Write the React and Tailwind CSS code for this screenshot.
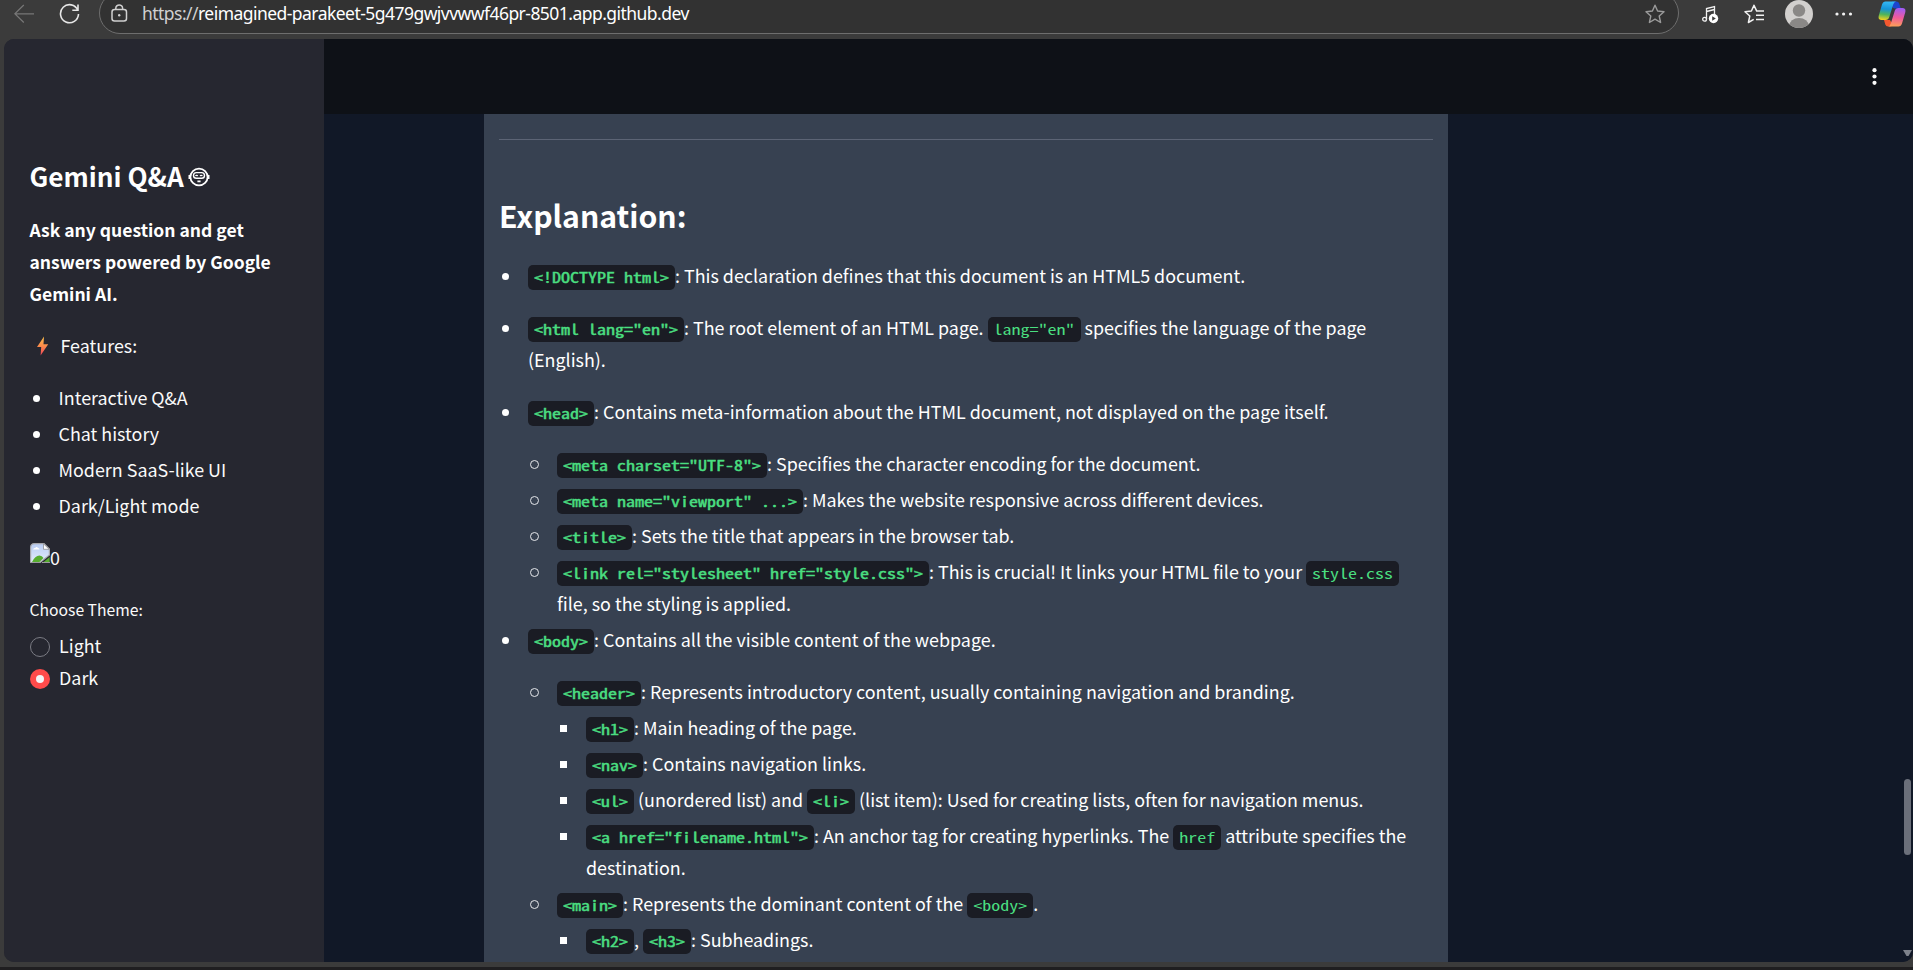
import React from "react";

function Code({ children, bold = false }) {
  return (
    <code
      className={`inline-block h-[25px] whitespace-pre rounded-[5px] bg-[#1a1c24] px-[6px] font-['Noto_Sans_Mono_CJK_SC','Liberation_Mono',monospace] text-[18px] leading-[21px] text-[#4ade80] ${
        bold ? "[-webkit-text-stroke:0.55px_#4ade80]" : ""
      }`}
    >
      <span className="inline-block origin-[0_18px] scale-y-[0.8]">{children}</span>
    </code>
  );
}

function Bullet({ kind }) {
  if (kind === "ring") return <span className="mt-[13px] ml-[2px] size-[9px] rounded-full border border-[#e5e7eb]" />;
  if (kind === "square") return <span className="mt-[14px] ml-[3px] size-[7px] bg-white" />;
  return <span className="mt-[14px] ml-[3px] size-[7px] rounded-full bg-white" />;
}

function Item({ kind, children }) {
  return (
    <div className="flex">
      <div className="flex h-8 w-[29px] shrink-0">
        <Bullet kind={kind} />
      </div>
      <div className="min-w-0">{children}</div>
    </div>
  );
}

function Sidebar() {
  return (
    <aside className="flex w-80 shrink-0 flex-col overflow-hidden bg-[#262730] pt-[113px] pl-[25.5px]">
      <h2 className="flex h-[48px] items-center text-[26.2px] leading-[48px] font-bold text-white">
        Gemini Q&amp;A
        <svg className="mt-[1px] ml-[4px]" width="22" height="20" viewBox="0 0 22 20" fill="none" stroke="#fff">
          <ellipse cx="11" cy="10" rx="8.6" ry="8.4" strokeWidth="1.8" />
          <path d="M1.3 8v4M20.7 8v4" strokeWidth="1.6" />
          <rect x="5.5" y="5.6" width="11" height="5.6" rx="2.8" strokeWidth="1.4" />
          <path d="M7.6 9.2c.2-1.2 1.8-1.2 2 0M12.2 9.2c.2-1.2 1.8-1.2 2 0" strokeWidth="1.2" />
          <path d="M9.4 14.4h3.2" strokeWidth="1.6" />
        </svg>
      </h2>
      <p className="mt-[14px] w-[270px] text-[17.5px] font-bold text-white">
        Ask any question and get
        <br />
        answers powered by Google
        <br />
        Gemini AI.
      </p>
      <p className="mt-[19px] flex items-center">
        <svg className="mt-[1px] mr-[12px] ml-[6px]" width="13" height="20" viewBox="0 0 13 20">
          <defs>
            <linearGradient id="bolt" x1="0" y1="0" x2="0" y2="1">
              <stop offset="0" stopColor="#fcc04a" />
              <stop offset="0.5" stopColor="#fb8b4b" />
              <stop offset="1" stopColor="#f0425a" />
            </linearGradient>
          </defs>
          <path d="M8 .5 1 11h4.2L4.6 19.5 12.2 8.300H7.500Z" fill="url(#bolt)" />
        </svg>
        Features:
      </p>
      <div className="mt-5 flex flex-col gap-1">
        <Item>Interactive Q&amp;A</Item>
        <Item>Chat history</Item>
        <Item>Modern SaaS-like UI</Item>
        <Item>Dark/Light mode</Item>
      </div>
      <div className="mt-[21px] flex h-8">
        <svg className="mt-[1px] ml-[0.5px]" width="20" height="20" viewBox="0 0 20 20">
          <defs>
            <linearGradient id="sky" x1="0" y1="0" x2="0" y2="1">
              <stop offset="0" stopColor="#b9cdf3" />
              <stop offset="1" stopColor="#e3ecfb" />
            </linearGradient>
          </defs>
          <path d="M.6 19.500V4.500Q.6.600 4.500.600H14l5.400 5.400v6L10 19.500Z" fill="url(#sky)" stroke="#a8a8ac" strokeWidth="1.200" />
          <path d="M13.500.800V6.300H19.200Z" fill="#fff" stroke="#8f8f93" strokeWidth=".8" />
          <path d="M3 6.500q.5-1.800 2.200-1.500Q6.500 3 8 5q1.600.2 1.500 1.600Z" fill="#fff" />
          <path d="M2 19Q5 12.500 9.500 12.500 12 12.500 13.500 15L9.500 19Z" fill="#57ad2f" />
          <path d="M0 19.500H10" stroke="#9b9b9f" strokeWidth="1" />
          <path d="M13 19.500 19.600 14V19.500Z" fill="#57ad2f" />
          <path d="M12 19.500H20" stroke="#9b9b9f" strokeWidth="1" />
        </svg>
        <span className="leading-[31px]">0</span>
      </div>
      <div className="mt-[20px] text-[15.7px]">Choose Theme:</div>
      <div className="mt-[3px] flex items-center">
        <span className="mt-[3px] mr-[9px] ml-[0.5px] size-5 rounded-full border border-[#7b7c84]" />
        Light
      </div>
      <div className="flex items-center">
        <span className="mt-[3px] mr-[9px] ml-[0.5px] flex size-5 items-center justify-center rounded-full bg-[#ff4b4b]">
          <span className="size-2 rounded-full bg-[#f3f4f6]" />
        </span>
        Dark
      </div>
    </aside>
  );
}

function Answer() {
  return (
    <section className="ml-40 h-[848px] w-[964px] overflow-hidden bg-[#374151] pt-[25px] pl-[15px] text-white">
      <div className="w-[934px] border-t border-[#5c6475]" />
      <h2 className="mt-[45px] h-[60px] text-[30.2px] leading-[60px] font-bold">Explanation:</h2>
      <div className="mt-[14px] flex w-[934px] flex-col">
        <Item>
          <Code bold>{"<!DOCTYPE html>"}</Code>: This declaration defines that this document is an HTML5 document.
        </Item>
        <div className="mt-5">
          <Item>
            <Code bold>{'<html lang="en">'}</Code>: The root element of an HTML page. <Code>{'lang="en"'}</Code> specifies the
            language of the page
            <br />
            (English).
          </Item>
        </div>
        <div className="mt-5">
          <Item>
            <Code bold>{"<head>"}</Code>: Contains meta-information about the HTML document, not displayed on the page itself.
            <div className="mt-5 flex flex-col gap-1">
              <Item kind="ring">
                <Code bold>{'<meta charset="UTF-8">'}</Code>: Specifies the character encoding for the document.
              </Item>
              <Item kind="ring">
                <Code bold>{'<meta name="viewport" ...>'}</Code>: Makes the website responsive across different devices.
              </Item>
              <Item kind="ring">
                <Code bold>{"<title>"}</Code>: Sets the title that appears in the browser tab.
              </Item>
              <Item kind="ring">
                <Code bold>{'<link rel="stylesheet" href="style.css">'}</Code>: This is crucial! It links your HTML file to your{" "}
                <Code>style.css</Code>
                <br />
                file, so the styling is applied.
              </Item>
            </div>
          </Item>
        </div>
        <div className="mt-1">
          <Item>
            <Code bold>{"<body>"}</Code>: Contains all the visible content of the webpage.
            <div className="mt-5 flex flex-col gap-1">
              <Item kind="ring">
                <Code bold>{"<header>"}</Code>: Represents introductory content, usually containing navigation and branding.
                <div className="mt-1 flex flex-col gap-1">
                  <Item kind="square">
                    <Code bold>{"<h1>"}</Code>: Main heading of the page.
                  </Item>
                  <Item kind="square">
                    <Code bold>{"<nav>"}</Code>: Contains navigation links.
                  </Item>
                  <Item kind="square">
                    <Code bold>{"<ul>"}</Code> (unordered list) and <Code bold>{"<li>"}</Code> (list item): Used for creating lists,
                    often for navigation menus.
                  </Item>
                  <Item kind="square">
                    <Code bold>{'<a href="filename.html">'}</Code>: An anchor tag for creating hyperlinks. The <Code>href</Code>{" "}
                    attribute specifies the
                    <br />
                    destination.
                  </Item>
                </div>
              </Item>
              <Item kind="ring">
                <Code bold>{"<main>"}</Code>: Represents the dominant content of the <Code>{"<body>"}</Code>.
                <div className="mt-1">
                  <Item kind="square">
                    <Code bold>{"<h2>"}</Code>, <Code bold>{"<h3>"}</Code>: Subheadings.
                  </Item>
                </div>
              </Item>
            </div>
          </Item>
        </div>
      </div>
    </section>
  );
}

const STAR = "M10 1.200 12.600 7 19 7.700 14.200 12 15.600 18.500 10 15.200 4.400 18.500 5.800 12 1 7.700 7.400 7Z";

function BrowserBar() {
  return (
    <div className="flex h-[39px] shrink-0 items-start overflow-hidden bg-[#3b3b3b]">
      <svg className="mt-[4px] ml-[14px]" width="20" height="20" viewBox="0 0 20 20" fill="none" stroke="#777" strokeWidth="1.200">
        <path d="M20 9.800H.8M9.800 1 .8 9.800l9 8.700" />
      </svg>
      <svg className="mt-[3px] ml-[25px]" width="21" height="22" viewBox="0 0 21 22" fill="none" stroke="#e6e6e6" strokeWidth="1.600">
        <path d="M18.800 7.200A9 9 0 1 0 19.500 11M19 1.500V7.300H13.300" />
      </svg>
      <div className="-mt-[8px] ml-[19px] flex h-[42px] w-[1580px] shrink-0 items-start rounded-full border border-[#6e6e6e] bg-[#323232]">
        <svg className="mt-[11px] ml-[11px]" width="17" height="18" viewBox="0 0 17 18" fill="none" stroke="#d0d0d0" strokeWidth="1.500">
          <rect x="1" y="5.500" width="14.500" height="11.500" rx="2.500" />
          <path d="M4.800 5.500V4.300a3.400 3.400 0 0 1 6.800 0v1.200" />
          <circle cx="8.200" cy="11.200" r="1.200" fill="#d0d0d0" stroke="none" />
        </svg>
        <div className="mt-[6px] ml-[14px] h-[30px] w-[548px] font-['Noto_Sans',sans-serif] text-[17.5px] leading-[28px] tracking-[-0.54px] whitespace-nowrap text-white">
          <span className="text-[#d0d0d0]">https://</span>reimagined-parakeet-5g479gwjvvwwf46pr-8501.app.github.dev
        </div>
        <svg className="mt-[11px] ml-[955px]" width="20" height="20" viewBox="0 0 20 20" fill="none" stroke="#9b9b9b" strokeWidth="1.400" strokeLinejoin="round">
          <path d={STAR} />
        </svg>
      </div>
      <svg className="mt-[5px] ml-[23px]" width="17" height="19" viewBox="0 0 17 19" fill="none" stroke="#f2f2f2" strokeWidth="1.300">
        <circle cx="2.600" cy="14.200" r="1.900" />
        <path d="M4.500 14.200V3.500L12.500 1.500V9M4.500 6.500 12.500 4.500" />
        <circle cx="11.500" cy="13.500" r="4.700" fill="#fff" stroke="none" />
        <path d="M10.200 11.200v4.600l3.600-2.300Z" fill="#3b3b3b" stroke="none" />
      </svg>
      <svg className="mt-[4px] ml-[25px]" width="21" height="20" viewBox="0 0 21 20" fill="none" stroke="#f2f2f2" strokeWidth="1.500" strokeLinejoin="round">
        <path d="M13 7 12.600 6.900 10 1.200 7.400 7 1 7.700 5.800 12 4.400 18.500 9.700 15.400" />
        <path d="M12.600 7H20M12 11.200H20M12 15.400H20" />
      </svg>
      <svg className="ml-[20px]" width="28" height="28" viewBox="0 0 28 28">
        <clipPath id="face">
          <circle cx="14" cy="14" r="14" />
        </clipPath>
        <g clipPath="url(#face)">
          <rect width="28" height="28" fill="#d2d0ce" />
          <circle cx="14" cy="10.500" r="6.200" fill="#8a8886" />
          <ellipse cx="14" cy="26" rx="9.800" ry="8" fill="#8a8886" />
        </g>
      </svg>
      <svg className="mt-[12px] ml-[22px]" width="18" height="4" viewBox="0 0 18 4" fill="#f2f2f2">
        <circle cx="2" cy="2" r="1.600" />
        <circle cx="8.600" cy="2" r="1.600" />
        <circle cx="15.500" cy="2" r="1.600" />
      </svg>
      <svg className="mt-[1px] ml-[25px] shrink-0" width="28" height="26" viewBox="0 0 28 26">
        <defs>
          <linearGradient id="cpA" x1="0.400" y1="0" x2="0.300" y2="1">
            <stop offset="0" stopColor="#35b8f5" />
            <stop offset="0.400" stopColor="#1594d8" />
            <stop offset="0.700" stopColor="#4fb45a" />
            <stop offset="1" stopColor="#f4d21f" />
          </linearGradient>
          <linearGradient id="cpB" x1="0.500" y1="0" x2="0.400" y2="1">
            <stop offset="0" stopColor="#a05cf5" />
            <stop offset="0.500" stopColor="#ef5a9d" />
            <stop offset="1" stopColor="#fda057" />
          </linearGradient>
        </defs>
        <path d="M14 .5h4.500q2 0 2.700 2l1.600 5H17Q14.500 7.500 13.500 4Z" fill="#1c45cf" />
        <path d="M6 19h6l2 3.500q1 2.500-2 3H10q-2 0-2.700-2Z" fill="#f4582f" />
        <path d="M7.500.5H18q-2 .3-2.800 3L11.300 16q-.8 3-3.800 3H3.500Q-.3 19 .8 14.500L4 3.500Q5 .5 7.500.5Z" fill="url(#cpA)" />
        <path d="M20.500 25.500H10q2-.3 2.800-3L16.700 10q.8-3 3.800-3h4q3.800 0 2.700 4.500L24 22.500q-1 3-3.500 3Z" fill="url(#cpB)" />
      </svg>
    </div>
  );
}

export default function App() {
  return (
    <div className="flex h-[970px] w-[1913px] flex-col overflow-hidden bg-[#3b3b3b] font-['Noto_Sans_CJK_SC',sans-serif] text-[17.9px] leading-8 text-[#fafafa]">
      <BrowserBar />
      <div className="ml-1 flex h-[923px] shrink-0 overflow-hidden rounded-[10px] bg-[#262730]">
        <Sidebar />
        <main className="flex flex-1 flex-col bg-[#111827]">
          <header className="flex h-[75px] shrink-0 justify-end bg-[#0e1117]">
            <svg className="mt-[28px] mr-[35px]" width="7" height="19" viewBox="0 0 7 19" fill="#fafafa">
              <circle cx="3.500" cy="3.200" r="2.100" />
              <circle cx="3.500" cy="9.500" r="2.100" />
              <circle cx="3.500" cy="15.800" r="2.100" />
            </svg>
          </header>
          <div className="flex justify-between">
            <Answer />
            <div className="mr-[2px] flex w-[8px] flex-col items-center">
              <div className="mt-[665px] h-[76px] w-[7px] shrink-0 rounded-full bg-[#6b6f7a]" />
              <svg className="mt-[95px] shrink-0" width="9" height="7" viewBox="0 0 9 7" fill="#7d818b">
                <path d="M0 0H9L5.500 6H3.500Z" />
              </svg>
            </div>
          </div>
        </main>
      </div>
      <div className="mt-[5px] h-[3px] shrink-0 bg-[#1f1e20]" />
    </div>
  );
}
